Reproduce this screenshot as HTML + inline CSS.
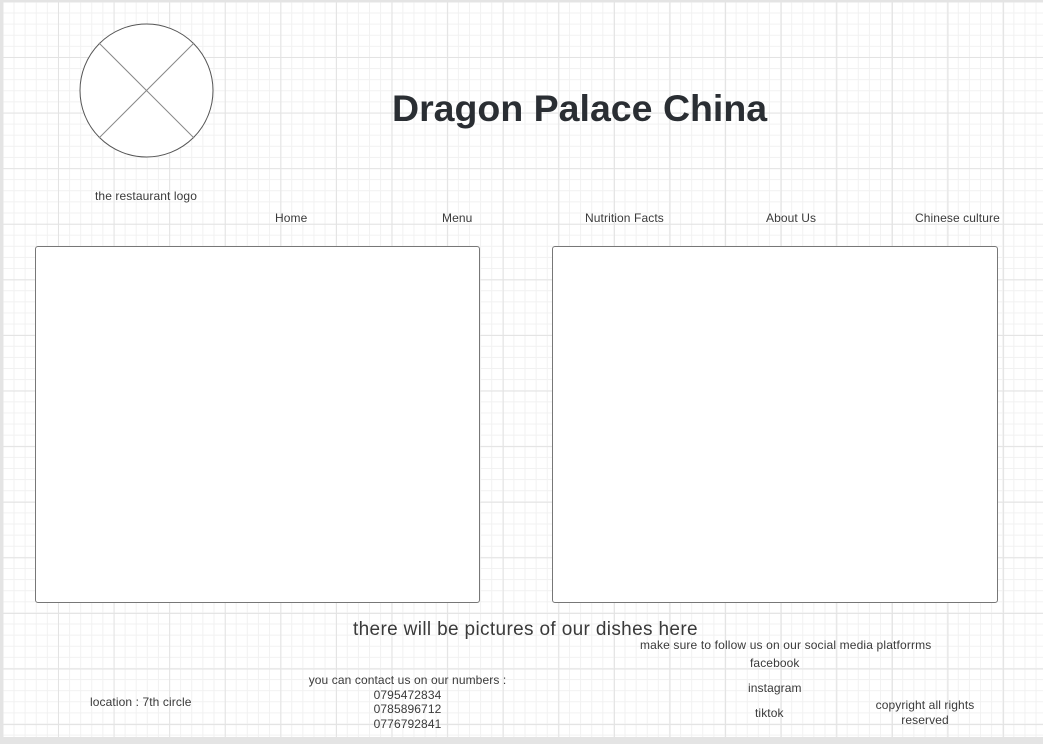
<!DOCTYPE html>
<html><head><meta charset="utf-8"><style>
html,body{margin:0;padding:0;width:1043px;height:744px;overflow:hidden;background:#e4e4e4;font-family:"Liberation Sans",sans-serif;color:#3a3a3a}
#pg{position:absolute;left:3px;top:2px;width:1040px;height:735px;background-color:#fff;
background-image:linear-gradient(#e3e3e3 1px,transparent 1px),linear-gradient(90deg,#e3e3e3 1px,transparent 1px),linear-gradient(#f1f1f1 1px,transparent 1px),linear-gradient(90deg,#f1f1f1 1px,transparent 1px);
background-size:55.6px 55.6px,55.6px 55.6px,11.12px 11.12px,11.12px 11.12px;background-position:-0.6px -0.6px}
.t{position:absolute;font-size:12px;white-space:nowrap;letter-spacing:0.1px}
.c{text-align:center}
.box{position:absolute;background:#fff;border:1px solid #777;border-radius:3px}
</style></head><body><div id="pg"></div>
<svg style="position:absolute;left:79px;top:23px" width="136" height="136"><circle cx="67.5" cy="67.5" r="66.5" fill="#fff" stroke="#555" stroke-width="1"/><line x1="20" y1="20" x2="115" y2="115" stroke="#888"/><line x1="115" y1="20" x2="20" y2="115" stroke="#888"/></svg>
<div class="t" style="left:95px;top:189px">the restaurant logo</div>
<div class="t" style="left:392px;top:87px;font-size:37.5px;letter-spacing:0;font-weight:bold;color:#2a2e33">Dragon Palace China</div>
<div class="t" style="left:275px;top:211px">Home</div>
<div class="t" style="left:442px;top:211px">Menu</div>
<div class="t" style="left:585px;top:211px">Nutrition Facts</div>
<div class="t" style="left:766px;top:211px">About Us</div>
<div class="t" style="left:915px;top:211px">Chinese culture</div>
<div class="box" style="left:35px;top:246px;width:443px;height:355px"></div>
<div class="box" style="left:552px;top:246px;width:444px;height:355px"></div>
<div class="t" style="left:353px;top:619px;font-size:19px;letter-spacing:0.35px">there will be pictures of our dishes here</div>
<div class="t" style="left:640px;top:638px;letter-spacing:0.15px">make sure to follow us on our social media platforrms</div>
<div class="t" style="left:750px;top:656px">facebook</div>
<div class="t" style="left:748px;top:681px">instagram</div>
<div class="t" style="left:755px;top:706px">tiktok</div>
<div class="t" style="left:90px;top:695px">location : 7th circle</div>
<div class="t c" style="left:300px;top:673px;width:215px;line-height:14.5px">you can contact us on our numbers :<br>0795472834<br>0785896712<br>0776792841</div>
<div class="t c" style="left:865px;top:698px;width:120px;line-height:15px;white-space:normal">copyright all rights reserved</div>
</body></html>
